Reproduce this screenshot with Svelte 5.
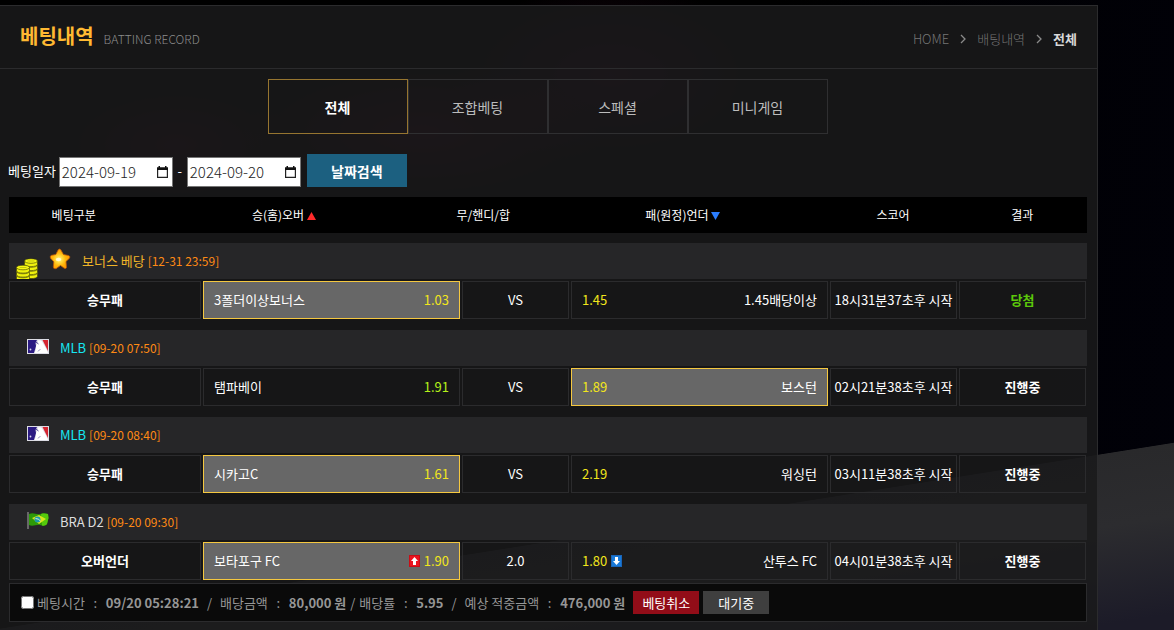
<script>
  const tabs = ['전체', '조합베팅', '스페셜', '미니게임'];
  let active = $state('전체');
  let from = $state('2024-09-19');
  let to = $state('2024-09-20');
  let checked = $state(false);

  const games = [
    { icon: 'bonus', league: '보너스 베당', tone: 'gold', date: '12-31 23:59', type: '승무패', home: '3폴더이상보너스', homeOdds: '1.03', mid: 'VS', awayOdds: '1.45', away: '1.45배당이상', pick: 'home', score: '18시31분37초후 시작', result: '당첨', won: true },
    { icon: 'mlb', league: 'MLB', tone: 'cyan', date: '09-20 07:50', type: '승무패', home: '탬파베이', homeOdds: '1.91', mid: 'VS', awayOdds: '1.89', away: '보스턴', pick: 'away', score: '02시21분38초후 시작', result: '진행중' },
    { icon: 'mlb', league: 'MLB', tone: 'cyan', date: '09-20 08:40', type: '승무패', home: '시카고C', homeOdds: '1.61', mid: 'VS', awayOdds: '2.19', away: '워싱턴', pick: 'home', score: '03시11분38초후 시작', result: '진행중' },
    { icon: 'bra', league: 'BRA D2', tone: 'plain', date: '09-20 09:30', type: '오버언더', home: '보타포구 FC', homeOdds: '1.90', mid: '2.0', awayOdds: '1.80', away: '산투스 FC', pick: 'home', score: '04시01분38초후 시작', result: '진행중', moved: true }
  ];
</script>

{#snippet calendar()}
  <svg viewBox="0 0 11 12" width="11" height="12" aria-hidden="true">
    <path d="M.6 2h9.800v9.400H.6z" fill="none" stroke="#222" stroke-width="1.2" />
    <path d="M0 1.500h11V4H0zM1.500 0H3v2H1.500zM8 0h1.500v2H8z" fill="#111" />
  </svg>
{/snippet}

{#snippet chevron()}
  <svg viewBox="0 0 6 10" width="6" height="10" aria-hidden="true">
    <path d="M1 1l4 4-4 4" fill="none" stroke="#8a8a8a" stroke-width="1.3" />
  </svg>
{/snippet}

{#snippet coinStack(x, y, n)}
  {#each Array(n) as _, i}
    <path d="M{x} {y + (n - 1 - i) * 4}v3.2c0 3.2 13 3.2 13 0v-3.2z" fill="#f0f20d" stroke="#38380a" stroke-width=".6" />
    <ellipse cx={x + 6.5} cy={y + (n - 1 - i) * 4} rx="6.5" ry="2.3" fill="#f7f913" stroke="#38380a" stroke-width=".6" />
    <path d="M{x + 3} {y + (n - 1 - i) * 4}h7" stroke="#b8bb10" stroke-width=".8" />
  {/each}
{/snippet}

{#snippet move(up)}
  <svg viewBox="0 0 11 12" width="11" height="12" role="img" aria-label={up ? '상승' : '하락'}>
    <rect width="11" height="12" fill={up ? '#c90d16' : '#1a65b8'} />
    <rect x="1" y="1" width="9" height="10" fill={up ? '#ea1420' : '#1879d8'} />
    {#if up}
      <path d="M5.5 2L9 6H7v4H4V6H2z" fill="#fff" />
    {:else}
      <path d="M5.5 10L9 6H7V2H4v4H2z" fill="#fff" />
    {/if}
  </svg>
{/snippet}

<main class="panel">
  <header class="head">
    <div class="title">
      <h1>베팅내역</h1>
      <span>BATTING RECORD</span>
    </div>
    <nav class="crumbs">
      <a href="#home">HOME</a>
      {@render chevron()}
      <a class="mid" href="#record">배팅내역</a>
      {@render chevron()}
      <a class="now" href="#all">전체</a>
    </nav>
  </header>

  <div class="tabs">
    {#each tabs as tab}
      <button type="button" class:active={active === tab} onclick={() => (active = tab)}>{tab}</button>
    {/each}
  </div>

  <form class="search" onsubmit={(e) => e.preventDefault()}>
    <label for="from">베팅일자</label>
    <span class="date"><input id="from" type="text" bind:value={from} />{@render calendar()}</span>
    <span class="dash">-</span>
    <span class="date"><input id="to" type="text" aria-label="종료일" bind:value={to} />{@render calendar()}</span>
    <button type="submit">날짜검색</button>
  </form>

  <table>
    <thead>
      <tr class="cols">
        <th>베팅구분</th>
        <th>승(홈)오버 <svg viewBox="0 0 9 8" width="9" height="8" aria-hidden="true"><path d="M4.5 0L9 8H0z" fill="#ff2a2a" /></svg></th>
        <th>무/핸디/합</th>
        <th>패(원정)언더 <svg viewBox="0 0 9 8" width="9" height="8" aria-hidden="true"><path d="M4.5 8L0 0h9z" fill="#2a7dff" /></svg></th>
        <th>스코어</th>
        <th>결과</th>
      </tr>
    </thead>
    {#each games as g}
      <tbody>
        <tr class="league">
          <td colspan="6" class={g.icon}>
            {#if g.icon === 'bonus'}
              <svg class="coins" viewBox="0 0 22 21" width="22" height="21" aria-hidden="true">
                {@render coinStack(8.5, 3, 4)}
                {@render coinStack(0.5, 9.5, 3)}
              </svg>
              <svg class="star" viewBox="0 0 22 22" width="22" height="22" aria-hidden="true">
                <defs>
                  <radialGradient id="glow" cx=".45" cy=".52" r=".55">
                    <stop offset="0" stop-color="#fff6a0" />
                    <stop offset=".25" stop-color="#ffe04a" />
                    <stop offset=".6" stop-color="#ffb60a" />
                    <stop offset="1" stop-color="#ff9800" />
                  </radialGradient>
                </defs>
                <path d="M9.200 1.800Q10.500 .3 11.800 1.800L14.500 6.500L19.500 7.500Q21.800 8.500 20.500 10.200L17 13.500L17.500 19.500Q17 21.200 15.200 20.200L11.500 17.500L7 20.700Q4.300 21.200 4.300 19L4.800 13.800L1.500 10.200Q.5 8 2.500 7.300L6.800 6.500Z" fill="url(#glow)" stroke="#b9540a" stroke-width=".8" stroke-linejoin="round" />
                <ellipse cx="9.500" cy="11.500" rx="2.800" ry="1.700" fill="#fffbe0" opacity=".85" />
              </svg>
            {:else if g.icon === 'mlb'}
              <svg class="flag" viewBox="0 0 22 15" width="22" height="15" aria-hidden="true">
                <rect width="22" height="15" fill="#dcdce4" />
                <path d="M1 1h9L8.500 4 9 7l-2 7H1z" fill="#2b1a83" />
                <path d="M15.500 1H21v11z" fill="#d52430" />
                <path d="M11 1.500q2.500-1 4 1l2 3.500 2 3.500 2 4.500H7.500l1.500-3.500L9 7l1.500-2.500z" fill="#fff" />
                <path d="M11 12.500q1-2 2.500-2" stroke="#8a86b8" stroke-width=".8" fill="none" />
                <path d="M9 3l2.500 2" stroke="#2b1a83" stroke-width=".8" />
                <circle cx="3.500" cy="10.500" r=".9" fill="#d8d6ee" />
              </svg>
            {:else}
              <svg class="flag" viewBox="0 0 22 17" width="22" height="17" aria-hidden="true">
                <path d="M1 0v17" stroke="#858585" stroke-width="1.400" />
                <path d="M2 2c5-2 7 1 11 0s5-1 8 0l.5 4-1.500 6c-2 2-4 2-7 1s-7 2-11 0z" fill="#2d9a08" />
                <path d="M14 2c3-1 5 0 7 0l.5 4-1.500 6c-1 1.500-3 2-5 1.500z" fill="#55c90c" />
                <path d="M5 6l7-3 7 4-7 5z" fill="#d8e51c" />
                <circle cx="10.500" cy="7.500" r="3" fill="#1c9caa" />
                <path d="M8.500 6.500q3 0 5 2.500" stroke="#d8f5d0" fill="none" />
              </svg>
            {/if}
            <span><span class={g.tone}>{g.league}</span> <span class="when">[{g.date}]</span></span>
          </td>
        </tr>
        <tr class="game">
          <td class="strong">{g.type}</td>
          <td class="side" class:picked={g.pick === 'home'}>
            <span>{g.home}</span>
            <span class="odds" class:lime={g.pick === 'away'}>{#if g.moved}{@render move(true)}{/if}{g.homeOdds}</span>
          </td>
          <td>{g.mid}</td>
          <td class="side" class:picked={g.pick === 'away'}>
            <span class="odds">{g.awayOdds}{#if g.moved}{@render move(false)}{/if}</span>
            <span>{g.away}</span>
          </td>
          <td>{g.score}</td>
          <td class="strong" class:won={g.won}>{g.result}</td>
        </tr>
      </tbody>
    {/each}
  </table>

  <section class="summary">
    <input id="slip" type="checkbox" bind:checked />
    <label for="slip">베팅시간</label>
    <i>:</i><b>09/20 05:28:21</b><i>/</i>
    <span>배당금액</span><i>:</i><b>80,000 원</b><i class="tight">/</i>
    <span>배당률</span><i>:</i><b>5.95</b><i>/</i>
    <span>예상 적중금액</span><i>:</i><b>476,000 원</b>
    <button type="button" class="cancel">베팅취소</button>
    <button type="button" class="wait">대기중</button>
  </section>
</main>

<style>
  :global(body) {
    background: #000;
  }
  :global(#app) {
    box-sizing: border-box;
    min-height: 100vh;
    padding: 5px 76px 0 0;
    background:
      radial-gradient(ellipse 180px 70px at 36% 21%, rgba(110, 10, 50, 0.35), transparent),
      radial-gradient(ellipse 160px 90px at 52% 12%, rgba(90, 10, 60, 0.35), transparent),
      radial-gradient(ellipse 120px 60px at 15% 23%, rgba(110, 10, 50, 0.3), transparent),
      linear-gradient(171deg, transparent 77%, #29292b 77.1%, #2c2c2f 86%, #1c1b28 98%),
      linear-gradient(100deg, #000 60%, #010109 100%);
    color: #fff;
    font: 13px/20px 'Noto Sans CJK KR', sans-serif;
  }
  .panel {
    box-sizing: border-box;
    min-height: calc(100vh - 5px);
    padding-bottom: 8px;
    border: solid #2b2b2d;
    border-width: 1px 1px 0 0;
    background: rgba(26, 26, 27, 0.86);
  }
  a {
    color: inherit;
    text-decoration: none;
  }
  button,
  input {
    font: inherit;
    color: inherit;
  }
  button {
    padding: 0;
    border: 0;
    cursor: pointer;
  }
  .head {
    display: flex;
    align-items: center;
    justify-content: space-between;
    height: 62px;
    padding: 0 20px;
    border-bottom: 1px solid #2b2b2d;
  }
  .title {
    display: flex;
    align-items: baseline;
    gap: 10px;
    padding-bottom: 2px;
  }
  h1 {
    margin: 0;
    color: #ffb932;
    font-size: 20px;
    line-height: 28px;
    font-weight: 700;
  }
  .title span {
    color: #8b8b8b;
    font-size: 12px;
    font-weight: 300;
  }
  .crumbs {
    display: flex;
    align-items: center;
    gap: 11px;
    padding-top: 4px;
    color: #757575;
    font-weight: 300;
  }
  .crumbs .now {
    color: #d8d8d8;
    font-weight: 700;
  }
  .tabs {
    display: flex;
    justify-content: center;
    padding: 10px 2px 20px 0;
  }
  .tabs button {
    width: 140px;
    height: 55px;
    border: 1px solid #2f2f31;
    background: transparent;
    color: #bcbcbc;
    font-size: 14px;
  }
  .tabs button.active {
    border-color: #967530;
    color: #fff;
    font-weight: 700;
  }
  .search {
    display: flex;
    align-items: center;
    gap: 3px;
    margin: 0 10px 10px 8px;
  }
  .date {
    display: flex;
    align-items: center;
    align-self: flex-end;
    box-sizing: border-box;
    width: 114px;
    height: 30px;
    padding: 0 4px 0 2px;
    border: 1px solid #767676;
    background: #fff;
    color: #222;
    font-size: 15px;
  }
  .date input {
    flex: 1;
    min-width: 0;
    padding: 0;
    border: 0;
    outline: 0;
    background: none;
    font-weight: 300;
  }
  .dash {
    width: 8px;
    text-align: center;
  }
  .search button {
    width: 100px;
    height: 33px;
    margin-left: 3px;
    background: #1c6080;
    font-size: 14px;
    font-weight: 700;
  }
  table,
  thead,
  tbody {
    display: block;
  }
  table {
    margin: 0 10px 0 9px;
  }
  tbody {
    margin-top: 10px;
  }
  tbody + tbody {
    margin-top: 11px;
  }
  .cols {
    display: grid;
    grid-template-columns: 12fr 27fr 10fr 27fr 12fr 12fr;
    align-items: center;
    height: 36px;
    background: #000;
  }
  th {
    padding: 0;
    font-size: 12px;
    font-weight: 400;
  }
  .league {
    display: block;
    background: #262628;
  }
  .league td {
    display: flex;
    align-items: center;
    gap: 11px;
    height: 36px;
    padding: 0 18px;
  }
  .league td.bonus {
    padding: 0 7px;
  }
  .coins {
    align-self: flex-end;
  }
  .star {
    align-self: flex-start;
    margin-top: 5px;
  }
  .flag {
    margin-bottom: 4px;
  }
  td svg {
    flex: none;
  }
  .gold {
    color: #f0b428;
  }
  .cyan {
    color: #16e6f2;
  }
  .plain {
    color: #ddd;
  }
  .when {
    color: #ff8a14;
    font-size: 12px;
  }
  .game {
    display: grid;
    grid-template-columns: 192fr 257fr 107fr 257fr 127fr 127fr;
    gap: 2px;
    margin: 2px 1px 0 0;
  }
  .game td {
    display: flex;
    align-items: center;
    justify-content: center;
    box-sizing: border-box;
    height: 38px;
    padding: 0;
    border: 1px solid #2b2b2d;
    white-space: nowrap;
  }
  .game .side {
    justify-content: space-between;
    padding: 0 10px;
  }
  .game .picked {
    border-color: #f5c840;
    background: #676767;
  }
  .strong {
    font-weight: 700;
  }
  .won {
    color: #5cc80a;
  }
  .odds {
    display: flex;
    align-items: center;
    gap: 4px;
    color: #f2e61c;
  }
  .odds.lime {
    color: #b4f01a;
  }
  .summary {
    display: flex;
    align-items: center;
    box-sizing: border-box;
    height: 39px;
    margin: 3px 10px 0 9px;
    padding: 0 11px;
    border: 1px solid #2b2b2d;
    background: #0a0a0a;
    color: #969696;
    white-space: nowrap;
  }
  .summary input {
    width: 13px;
    height: 13px;
    margin: 0 3px 0 0;
  }
  .summary i {
    width: 21px;
    font-style: normal;
    text-align: center;
  }
  .summary i.tight {
    width: 13px;
  }
  .summary button {
    width: 66px;
    height: 23px;
    color: #fff;
  }
  .summary .cancel {
    margin: 0 4px 0 8px;
    background: #920d18;
  }
  .summary .wait {
    background: #3f3f3f;
  }
</style>
